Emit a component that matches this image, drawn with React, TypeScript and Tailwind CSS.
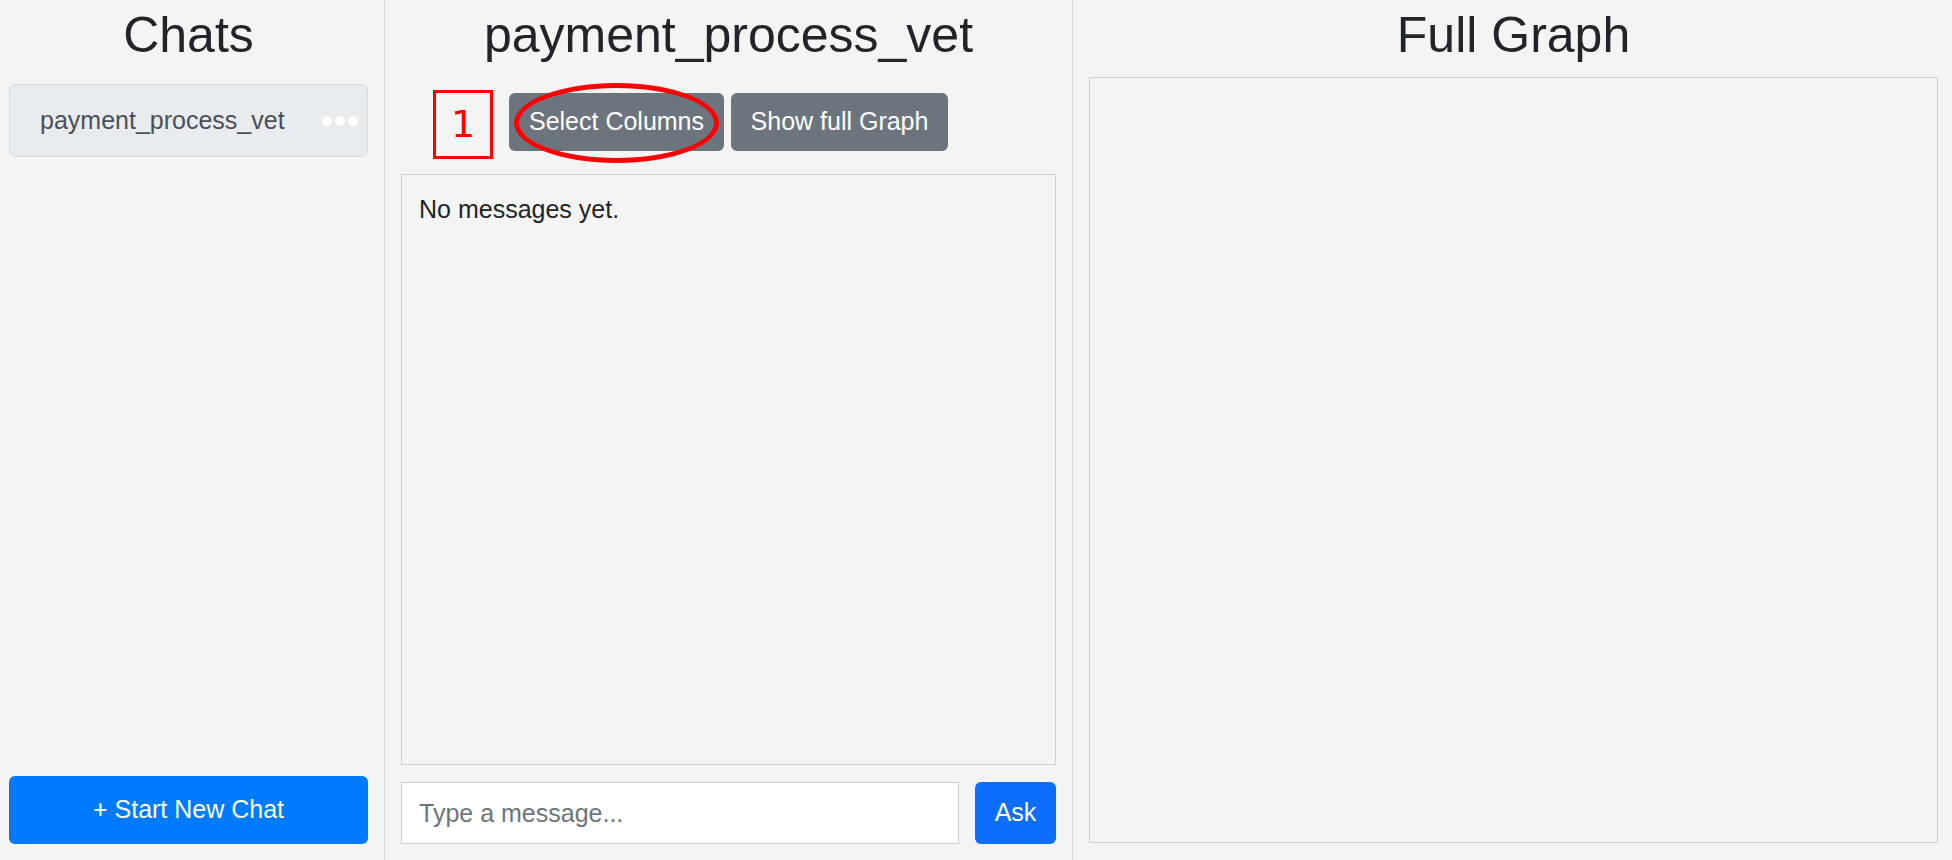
const font = { fontFamily: '"Liberation Sans", Arial, sans-serif' };

const App = () => {
  return (
    <div
      className="flex h-[860px] w-[1952px] bg-[#f4f4f4] text-[25px] text-[#212529]"
      style={font}
    >
      {/* sidebar */}
      <div className="flex w-[385px] flex-col border-r border-[#dcdcdc] pb-[16px] pl-[9px] pr-[16px] pt-[5px]">
        <h2 className="text-center text-[50px] leading-[60px] font-normal">Chats</h2>
        <div className="mt-[19px] flex h-[73px] items-center justify-between rounded-[7px] border border-[#d6d8db] bg-[#e9ecef] pl-[30px] pr-[9px]">
          <span className="text-[#495057]">payment_process_vet</span>
          <div className="flex gap-[3px]">
            <span className="h-[10px] w-[10px] rounded-full bg-white" />
            <span className="h-[10px] w-[10px] rounded-full bg-white" />
            <span className="h-[10px] w-[10px] rounded-full bg-white" />
          </div>
        </div>
        <div className="flex-1" />
        <button className="h-[68px] w-full rounded-[6px] bg-[#007bff] text-white">
          + Start New Chat
        </button>
      </div>

      {/* chat */}
      <div className="flex w-[688px] flex-col border-r border-[#dcdcdc] px-[16px] pb-[16px] pt-[5px]">
        <h2 className="text-center text-[50px] leading-[60px] font-normal">payment_process_vet</h2>
        <div className="relative mt-[28px] flex justify-center gap-[7px]">
          <div
            className="absolute left-[32px] top-[-3px] flex h-[69px] w-[60px] items-center justify-center border-[3px] border-[#ff0000] text-[38px] text-[#ff0000]"
            style={{ fontFamily: '"DejaVu Sans", sans-serif' }}
          >
            1
          </div>
          <button className="h-[58px] w-[215px] rounded-[6px] bg-[#6c757d] text-white">
            Select Columns
          </button>
          <button className="h-[58px] w-[217px] rounded-[6px] bg-[#6c757d] text-white">
            Show full Graph
          </button>
          <div className="pointer-events-none absolute left-[113px] top-[-10px] h-[80px] w-[205px] rounded-[50%] border-[5px] border-[#ff0000]" />
        </div>
        <div className="mt-[23px] flex-1 border border-[#cfcfcf] px-[17px] py-[16px] leading-[37px]">
          No messages yet.
        </div>
        <div className="mt-[17px] flex gap-[16px]">
          <input
            className="h-[62px] flex-1 border border-[#cfcfcf] bg-white px-[17px] text-[25px] outline-none placeholder:text-[#6c757d]"
            placeholder="Type a message..."
            style={font}
          />
          <button className="h-[62px] w-[81px] rounded-[6px] bg-[#0d6efd] text-white">Ask</button>
        </div>
      </div>

      {/* graph */}
      <div className="flex flex-1 flex-col pb-[17px] pl-[16px] pr-[14px] pt-[5px]">
        <h2 className="text-center text-[50px] leading-[60px] font-normal">Full Graph</h2>
        <div className="mt-[12px] flex-1 border border-[#cfcfcf]" />
      </div>
    </div>
  );
};

export default App;
